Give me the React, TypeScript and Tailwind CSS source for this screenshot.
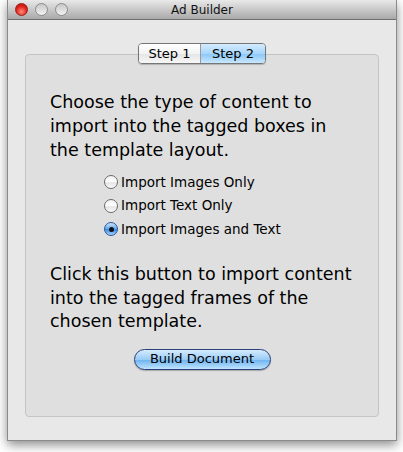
import React from "react";

function Radio({ checked }: { checked?: boolean }) {
  return checked ? (
    <span className="relative inline-flex h-[14px] w-[14px] items-center justify-center rounded-full border border-[#2a55a0] bg-[linear-gradient(to_bottom,#cfe6fb,#5ea4ec_50%,#3d8ae2_55%,#a8d6fb)]">
      <span className="h-[5px] w-[5px] rounded-full bg-[#111]" />
    </span>
  ) : (
    <span className="inline-flex h-[14px] w-[14px] rounded-full border border-[#6b6b6b] bg-[linear-gradient(to_bottom,#f4f4f4,#ffffff_50%,#e4e4e4_55%,#fdfdfd)]" />
  );
}

export default function App() {
  const font = { fontFamily: '"DejaVu Sans", "Liberation Sans", sans-serif' };
  return (
    <div className="h-[452px] w-[403px] bg-white" style={font}>
      <div className="ml-[7px] flex h-[441px] w-[390px] flex-col border-x border-b border-[#8a8a8a] bg-[#e8e8e8] shadow-[0_4px_10px_rgba(0,0,0,0.45)]">
        <div className="relative flex h-[20px] items-center border-b border-[#6f6f6f] bg-[linear-gradient(to_bottom,#e9e9e9,#c9c9c9_50%,#a9a9a9)]">
          <div className="flex items-center gap-[7px] pl-[7px]">
            <span className="h-[13px] w-[13px] rounded-full border border-[#9b1a14] bg-[radial-gradient(circle_at_50%_70%,#ff8b80,#e3251a_55%,#a5130c)]" />
            <span className="h-[13px] w-[13px] rounded-full border border-[#8c8c8c] bg-[linear-gradient(to_bottom,#c7c7c7,#f2f2f2)]" />
            <span className="h-[13px] w-[13px] rounded-full border border-[#8c8c8c] bg-[linear-gradient(to_bottom,#c7c7c7,#f2f2f2)]" />
          </div>
          <div className="absolute inset-0 flex items-center justify-center text-[12px] text-[#111]">Ad Builder</div>
        </div>
        <div className="flex flex-1 flex-col px-[17px] pb-[23px] pt-[23px]">
          <div className="relative z-10 mb-[-10px] flex justify-center">
            <div className="flex h-[21px] overflow-hidden rounded-[4px] border border-[#767676] text-[13px] text-black shadow-[0_1px_1px_rgba(0,0,0,0.2)]">
              <div className="flex w-[62px] items-center justify-center border-r border-[#9a9a9a] bg-[linear-gradient(to_bottom,#ffffff,#f3f3f3_50%,#e6e6e6_55%,#f7f7f7)]">Step 1</div>
              <div className="flex w-[64px] items-center justify-center bg-[linear-gradient(to_bottom,#d3ebfd,#a9d6fb_50%,#8ec8f8_55%,#c7e8fe)]">Step 2</div>
            </div>
          </div>
          <div className="flex flex-1 flex-col rounded-[4px] border border-[#c4c4c4] bg-[#dfdfdf] pl-[24px] pt-[35px]">
            <p className="text-[17.5px] leading-[24px] text-black">
              Choose the type of content to
              <br />
              import into the tagged boxes in
              <br />
              the template layout.
            </p>
            <div className="ml-[54px] mt-[10px] flex flex-col gap-[3.5px] text-[13.5px] text-black">
              <div className="flex h-[20px] items-center gap-[3px]"><Radio />Import Images Only</div>
              <div className="flex h-[20px] items-center gap-[3px]"><Radio />Import Text Only</div>
              <div className="flex h-[20px] items-center gap-[3px]"><Radio checked />Import Images and Text</div>
            </div>
            <p className="mt-[24px] text-[17.5px] leading-[23.5px] text-black">
              Click this button to import content
              <br />
              into the tagged frames of the
              <br />
              chosen template.
            </p>
            <div className="mt-[15px] flex justify-center pr-[24px]">
              <button className="flex h-[21px] w-[137px] items-center justify-center rounded-full border border-[#2b3f7a] bg-[linear-gradient(to_bottom,#d6ecfd,#98ccf7_50%,#72b6f2_55%,#bfe4fd)] text-[13px] text-black shadow-[0_1px_1px_rgba(0,0,0,0.25)]">
                Build Document
              </button>
            </div>
          </div>
        </div>
      </div>
    </div>
  );
}
